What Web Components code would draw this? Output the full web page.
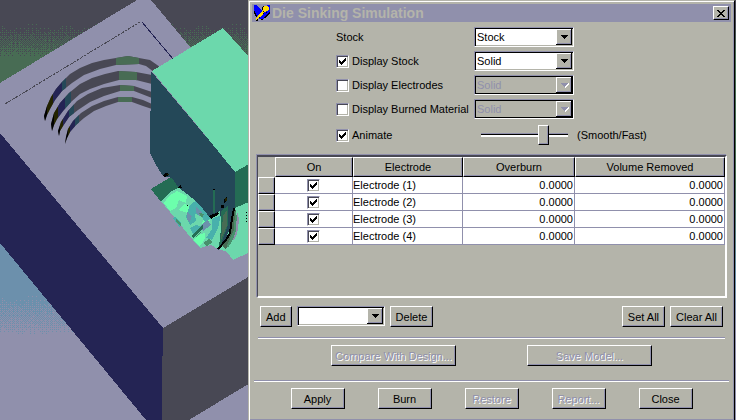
<!DOCTYPE html>
<html lang="en">
<head>
<meta charset="utf-8">
<title>Die Sinking Simulation</title>
<style>
  :root { --face: #b4b4aa; --dim: #9090ac; --deep: #484854; --ink: #000; }
  body { margin: 0; font: 11px/14px "Liberation Sans", Arial, sans-serif; color: var(--ink); }
</style>
</head>
<body>
<die-workspace>
  <die-scene slot="scene"></die-scene>
  <sim-dialog heading="Die Sinking Simulation">
    <option-row label="Stock" value="Stock"></option-row>
    <option-row label="Display Stock" value="Solid" toggle checked></option-row>
    <option-row label="Display Electrodes" value="Solid" toggle disabled></option-row>
    <option-row label="Display Burned Material" value="Solid" toggle disabled></option-row>
    <animate-row label="Animate" hint="(Smooth/Fast)"></animate-row>
    <electrode-table></electrode-table>
    <button-bar kind="edit">
      <push-button>Add</push-button>
      <drop-list label="Electrode to add"></drop-list>
      <push-button>Delete</push-button>
      <push-button push>Set All</push-button>
      <push-button>Clear All</push-button>
    </button-bar>
    <button-bar kind="model">
      <push-button disabled>Compare With Design...</push-button>
      <push-button disabled>Save Model...</push-button>
    </button-bar>
    <button-bar kind="actions">
      <push-button>Apply</push-button>
      <push-button>Burn</push-button>
      <push-button disabled>Restore</push-button>
      <push-button disabled>Report...</push-button>
      <push-button>Close</push-button>
    </button-bar>
  </sim-dialog>
</die-workspace>

<script>
const checkCss = `
  input[type=checkbox] { appearance: none; box-sizing: border-box; flex: none; width: 13px; height: 13px; margin: 0;
    background: #fff; border: 1px solid; border-color: var(--dim) #fff #fff var(--dim);
    box-shadow: inset 1px 1px var(--deep), inset -1px -1px var(--face); }
  input[type=checkbox]:checked { background: #fff url("data:image/svg+xml,%3Csvg xmlns='http://www.w3.org/2000/svg' viewBox='0 0 11 11' shape-rendering='crispEdges'%3E%3Cpath d='M2 4h1v1h1v1h1v-1h1v-1h1v-1h1v-1h1v3h-1v1h-1v1h-1v1h-1v1h-1v-1h-1v-1h-1z'/%3E%3C/svg%3E") center / 11px 11px no-repeat; }`;

const selectCss = `
  .drop { position: relative; display: grid; height: 20px; }
  select { appearance: none; box-sizing: border-box; width: 100%; height: 20px; margin: 0; padding: 0 18px 0 2px;
    font: inherit; color: inherit; background: #fff; border: 1px solid; border-color: var(--dim) #fff #fff var(--dim);
    border-radius: 0; box-shadow: inset 1px 1px #000, inset -1px -1px var(--face); opacity: 1; }
  .drop svg { position: absolute; right: 2px; top: 2px; width: 16px; height: 16px; pointer-events: none; }
  select:disabled { background: var(--face); color: var(--dim); box-shadow: inset 1px 1px #000, inset -1px -1px #000; }`;

const arrow = disabled => `<svg viewBox="0 0 16 16" shape-rendering="crispEdges" aria-hidden="true">
  <path fill="#b4b4aa" d="M0 0h16v16H0z"/><path fill="#fff" d="M0 0h16v1H1v15H0z"/>
  <path fill="#9090ac" d="M14 1h1v14H1v-1h13z"/><path d="M15 0h1v16H0v-1h15z"/>
  ${disabled ? '<path fill="#fff" d="M9 10v-2h1v-1h1v-1h2v2h-1v1h-1v1h-1v1h-1z"/>' : ''}
  <path fill="${disabled ? '#9090ac' : '#000'}" d="M5 6h7v1h-1v1h-1v1h-1v1h-1v-1h-1v-1h-1v-1h-1z"/></svg>`;

const dropdown = (id, value, label, disabled) => `<span class="drop"><select id="${id}" ${label ? `aria-label="${label}"` : ''}
  ${disabled ? 'disabled' : ''}><option>${value}</option></select>${arrow(disabled)}</span>`;

class Base extends HTMLElement {
  connectedCallback() {
    if (!this.shadowRoot) this.attachShadow({ mode: 'open' }).innerHTML = this.view();
  }
}

customElements.define('die-workspace', class extends Base {
  view() { return `<style>
    :host { display: grid; grid-template-columns: minmax(0, 248fr) minmax(0, 487fr); min-height: 100vh; padding-right: 1px;
      background: linear-gradient(#484854 24px, #486c54 56px, #486c54 180px, #6c90ac 280px, #9090ac 330px); }
    </style><slot name="scene"></slot><slot></slot>`; }
});

/* Coarse ordered dither between two flat colours, one unit cell per pixel. */
function dither(x0, x1, y0, y1) {
  const bayer = [0,8,2,10,12,4,14,6,3,11,1,9,15,7,13,5];
  let d = '';
  for (let y = y0; y < y1; y++) for (let x = x0; x < x1; x++) {
    const noise = ((x * 73 + x * x * 31) % 17 - 8) / 60;
    if ((y - y0) / (y1 - y0) + noise > (bayer[(y % 4) * 4 + x % 4] + .5) / 16) d += `M${x} ${y}h1v1h-1z`;
  }
  return d;
}

const grooves = [
  { d: 'M45 121L44 116L47 106L51 97L56 89L62 82L70 74L80 68L92 63L104 60L116 58L128 56L139 58L150 60L160 67L154 72L146 66L139 64L116 65L100 69L84 75L72 83L62 91L55 100L50 109L47 115Z', cut: [45, 53, 62, 66, 116, 139] },
  { d: 'M52 131L51 124L54 113L60 103L69 93L80 84L92 78L105 74L118 71L136 72L152 75L152 84L136 80L119 80L104 84L90 89L80 94L71 102L63 111L57 119L54 125Z', cut: [52, 58, 65, 71, 119, 137] },
  { d: 'M59 136L58 131L61 122L68 111L77 101L88 94L102 88L120 85L134 86L152 92L152 98L134 91L120 91L104 96L90 102L78 110L69 117L63 126L60 131Z', cut: [58, 63, 69, 74, 120, 134] },
  { d: 'M65 144L66 137L68 129L73 121L81 113L92 106L104 101L118 97L132 97L143 100L152 104L152 109L143 106L132 102L118 102L106 106L94 111L84 118L76 125L70 132L67 138Z', cut: [66, 70, 75, 79, 118, 132] }
];

customElements.define('die-scene', class extends Base {
  view() {
    const arcs = grooves.map((g, i) => {
      const c = g.cut;
      return `<clipPath id="g${i}"><path d="${g.d}"/></clipPath><g clip-path="url(#g${i})">
        <path fill="#484854" d="M0 0h250v200H0z"/>
        <path d="M0 50h${c[0] + 2}v110H0z"/>
        <path fill="#242400" d="M${c[0] + 2} 50H${c[1]}v100H${c[0] + 2}z"/>
        <path fill="#242454" d="M${c[1]} 50H${c[2]}v100H${c[1]}z"/>
        <path fill="#244858" d="M${c[2]} 50H${c[3]}v100H${c[2]}z"/>
        <path fill="#486c54" d="M${c[4]} 50H${c[5]}v100H${c[4]}z"/></g>`;
    }).join('');
    return `<style>:host { display: block; position: relative; min-width: 0; overflow: hidden; background: #9090ac; }
      svg { position: absolute; inset: 0; width: 100%; height: 100%; display: block; }</style>
    <svg viewBox="0 0 248 420" preserveAspectRatio="xMinYMin slice" shape-rendering="crispEdges" role="img" aria-label="Die block with electrode">
      <path fill="#484854" d="M0 0h250v60H0z"/>
      <path fill="#486c54" d="M0 56h250v44H0z"/>
      <path fill="#486c54" d="${dither(0, 250, 24, 56)}"/>
      <path fill="#6c90ac" d="M0 230h80v104H0z"/>
      <path fill="#9090ac" d="${dither(0, 80, 296, 334)}"/>
      <path fill="#9090ac" d="M0 83L137 0H151L250 119V277L163 328L0 133Z"/>
      <path fill="#242454" d="M0 133L163 328L162 420H146L0 243Z"/>
      <path fill="#484854" d="M163 328L250 276V383L189 420H162V356H163Z"/>
      <path fill="none" stroke="#484854" stroke-dasharray="3 1" d="M5 104L140 22"/>
      <path fill="none" stroke="#242454" d="M142 22L173 59"/>
      ${arcs}
      <path fill="#246c54" d="M151 189L171 177L180 188L161 202Z"/>
      <path fill="#6cd8ac" d="M161 201L172 191L180 187L192 197L212 210L235 190L250 202V252L233 260L227 252L218 249L211 245L200 248L187 233L170 212Z"/>
      <path fill="#6cffac" d="M164 203L169 196L177 191L187 196L186 203L179 200L176 208L170 211ZM178 210L184 204L193 207L188 213ZM198 235L205 233V238L202 244L199 246L194 240ZM204 218L210 220L207 225L202 224Z"/>
      <path fill="#48b0ac" d="M190 205L197 200L204 208L212 218L205 222L201 216L195 214L196 221L190 225L186 217ZM212 219L221 215L218 228L212 240L206 238L212 229ZM175 217L181 222L180 228L173 218ZM190 228L196 225L202 227L193 234Z"/>
      <path fill="#6c90ac" d="M196 207L202 212L200 217L196 213ZM201 225L208 220L211 225L203 231ZM187 212L192 216L190 222L187 220Z"/>
      <path fill="#48906c" d="M176 219L181 223V226L176 222ZM203 243L209 239L213 242L207 246ZM199 213L204 214L202 218ZM195 237L201 232L197 237Z"/>
      <path fill="#246c54" d="M191 236L203 225V228L193 238Z"/>
      <path fill="#244858" d="M151 71L235 171V208L232 222L224 244L218 250L222 235L220 210L211 219L203 209L192 198L178 187L172 178L163 176L156 165L150 153V111H151Z"/>
      <path fill="#6cd8ac" d="M152 71L223 28L250 58V164L235 172L192 119Z"/>
      <path fill="#246c54" d="M235 172L249 164V202L235 208Z"/>
      <path fill="#246c54" d="M213 190h2v23h-2zM221 211L228 206V225L221 244L219 246L221 229Z"/>
      <path fill="#486c54" d="M223 216L227 210V226L221 240ZM232 213L236 209L237 225L232 239L226 249L222 246L229 237Z"/>
      <path fill="#48906c" d="M235 211L238 219L236 234L228 248L227 245L234 230Z"/>
      <path fill="#9090ac" d="M237 213h1l1 8-2 13-3 6h-1l3-10z"/>
      <path fill="none" stroke="#000" stroke-width="2" d="M234 208L232 219L230 233L226 240L218 249"/>
      <path d="M163 175L166 173L169 174L168 176L164 177ZM178 188L180 185L181 186L182 188ZM209 216L218 212L219 214L211 219ZM221 205h3v3h-3zM224 199l3-2v4l-3 2zM213 189h2v1h-2zM187 205h1v1h-1zM246 212h1v1h-1zM246 215h1v1h-1zM246 218h1v1h-1zM246 221h1v1h-1z"/>
      <path fill="#242400" d="M167 174h2v1h-2zM225 198h2v3h-2z"/>
    </svg>`;
  }
});

customElements.define('sim-dialog', class extends Base {
  view() { return `<style>
    :host { display: flex; flex-direction: column; box-sizing: border-box; min-width: 0; background: var(--face); padding: 3px 3px 11px;
      border: solid; border-width: 1px 1px 0; border-color: var(--face) #000 #000 var(--face);
      box-shadow: inset 1px 1px #fff, inset -1px -1px var(--dim); }
    header { display: flex; align-items: center; gap: 2px; height: 18px; padding: 0 2px; margin-bottom: 5px; background: var(--dim); color: var(--face); }
    h1 { flex: 1; margin: 0; font-size: 14px; line-height: 18px; font-weight: bold; white-space: nowrap; }
    header svg { flex: none; }
    button { display: grid; place-items: center; width: 16px; height: 14px; padding: 0; background: var(--face); border: 1px solid; border-color: #fff #000 #000 #fff;
      box-shadow: inset -1px -1px var(--dim); }
    </style>
    <header>
      <svg width="16" height="16" viewBox="0 0 16 16" shape-rendering="crispEdges" aria-hidden="true">
        <path fill="#00f" d="M0 0H3L5 3L8 5V9L4 12L1 8L0 6ZM13 0H16V8L13 11L8 15L5 14L9 8L12 6Z"/>
        <path d="M0 6h1v2h1v2h1v2H2v-1H1V9H0zM15 7h1v2h-1v1h-1v1h-1v1h-1v1h-2v-1h1v-1h1v-1h1V9h1V8h1zM2 13h1v1H2zM7 14h2v1H7zM8 7h1v1h1v1H8zM2 15h2v1H2zM8 2h1v3H8zM9 1h2v1H9z"/>
        <path fill="#fd0" d="M9 2H10V1H14V2H15V5H14V6H12V7H10L9 9L6 12L4 13L3 15H2V13L4 11L6 8L8 7L9 5Z"/>
        <path d="M9 6h1v1H9zM5 12h1v1H5zM3 14h1v1H3zM12 7h1v1h-1z"/>
      </svg>
      <h1>${this.getAttribute('heading')}</h1>
      <button aria-label="Close window"><svg width="8" height="7" viewBox="0 0 8 7" shape-rendering="crispEdges" aria-hidden="true"><path d="M0 0h2v1h1v1h2V1h1V0h2v1H7v1H6v1H5v1h1v1h1v1h1v1H6V6H5V5H3v1H2v1H0V6h1V5h1V4h1V3H2V2H1V1H0z"/></svg></button>
    </header>
    <slot></slot>`; }
});

customElements.define('option-row', class extends Base {
  view() {
    const label = this.getAttribute('label'), off = this.hasAttribute('disabled');
    const lead = this.hasAttribute('toggle')
      ? `<label><input type="checkbox" ${this.hasAttribute('checked') ? 'checked' : ''}>${label}</label>`
      : `<label for="kind">${label}</label>`;
    return `<style>:host { display: grid; grid-template-columns: 138px 100px; align-items: center; height: 20px; margin: 0 0 4px 84px; }
      label { display: flex; align-items: center; gap: 3px; white-space: nowrap; } ${checkCss} ${selectCss}</style>
      ${lead}${dropdown('kind', this.getAttribute('value'), this.hasAttribute('toggle') ? label + ' style' : '', off)}`;
  }
});

customElements.define('animate-row', class extends Base {
  view() { return `<style>:host { display: grid; grid-template-columns: 145px 87px auto; align-items: center; height: 20px; margin: 2px 0 10px 84px; }
      label { display: flex; align-items: center; gap: 3px; } ${checkCss}
      input[type=range] { appearance: none; width: 87px; height: 20px; margin: 0; background: transparent; }
      input[type=range]::-webkit-slider-runnable-track { height: 4px; background: linear-gradient(var(--dim) 1px, #000 1px 2px, #fff 2px); }
      input[type=range]::-webkit-slider-thumb { appearance: none; box-sizing: border-box; width: 11px; height: 20px; margin-top: -8px; background: var(--face);
        border: 1px solid; border-color: #fff #000 #000 #fff; box-shadow: inset -1px -1px var(--dim); }
      output { padding-left: 9px; white-space: nowrap; }</style>
      <label><input type="checkbox" checked>${this.getAttribute('label')}</label>
      <input id="speed" type="range" min="0" max="100" value="75" aria-label="Animation speed">
      <output for="speed">${this.getAttribute('hint')}</output>`; }
});

customElements.define('electrode-table', class extends Base {
  view() {
    const rows = [1, 2, 3, 4].map(n => `<tr><th scope="row" aria-label="Row ${n}"></th><td class="on"><input type="checkbox" checked aria-label="Electrode (${n}) on"></td>
      <td>Electrode (${n})</td><td class="num">0.0000</td><td class="num">0.0000</td></tr>`).join('');
    return `<style>
      :host { display: block; flex: 1; box-sizing: border-box; min-height: 110px; margin: 0 4px 0 5px; border: solid; border-width: 2px 2px 2px 1px;
        border-color: var(--deep) #fff #fff var(--deep); box-shadow: -1px -1px var(--dim); }
      table { width: 100%; table-layout: fixed; border-collapse: separate; border-spacing: 0; }
      th, td { box-sizing: border-box; padding: 0; white-space: nowrap; }
      th { background: var(--face); font-weight: normal; border: 1px solid; border-color: #fff #000 #000 #fff; box-shadow: inset -1px -1px var(--dim); }
      thead th { height: 20px; }
      thead td { background: var(--face); }
      tbody th, tbody td { height: 17px; line-height: 16px; }
      tbody td { background: #fff; border: solid var(--dim); border-width: 0 1px 1px 0; }
      td.num { text-align: right; padding-right: 1px; } td.on { text-align: center; }
      col.head { width: 17px; } col.c1 { width: 78px; } col.c2 { width: 110px; } col.c3 { width: 112px; } ${checkCss}
      .on input[type=checkbox] { display: block; margin: 0 auto; }</style>
      <table><colgroup><col class="head"><col class="c1"><col class="c2"><col class="c3"><col></colgroup>
      <thead><tr><td></td><th scope="col">On</th><th scope="col">Electrode</th><th scope="col">Overburn</th><th scope="col">Volume Removed</th></tr></thead>
      <tbody>${rows}</tbody></table>`;
  }
});

customElements.define('drop-list', class extends Base {
  view() { return `<style>:host { display: block; width: 88px; } ${selectCss}</style>${dropdown('list', '', this.getAttribute('label'), false)}`; }
});

customElements.define('push-button', class extends Base {
  view() { return `<style>
    :host { display: block; width: var(--button-width, auto); }
    :host([push]) { margin-left: auto; }
    button { display: block; box-sizing: border-box; width: 100%; height: 21px; margin: 0; padding: 0 var(--button-pad, 5px); font: inherit; color: #000; white-space: nowrap; background: var(--face);
      border: 1px solid; border-color: #fff #000 #000 #fff; box-shadow: inset -1px -1px var(--dim); }
    button:disabled { color: var(--dim); text-shadow: 1px 1px #fff; }
    </style><button ${this.hasAttribute('disabled') ? 'disabled' : ''}><slot></slot></button>`; }
});

customElements.define('button-bar', class extends Base {
  view() { return `<style>
    :host { display: flex; justify-content: center; }
    :host([kind=edit]) { justify-content: flex-start; gap: 5px; margin: 8px 8px 10px; }
    :host([kind=model]), :host([kind=actions]) { --button-pad: 2px; padding-top: 7px; border-top: 1px solid var(--dim); box-shadow: inset 0 1px #fff; }
    :host([kind=model]) { --button-width: 125px; gap: 71px; margin: 0 6px 14px; }
    :host([kind=actions]) { --button-width: 54px; gap: 33px; margin: 0 2px; }
    </style><slot></slot>`; }
});
</script>
</body>
</html>
